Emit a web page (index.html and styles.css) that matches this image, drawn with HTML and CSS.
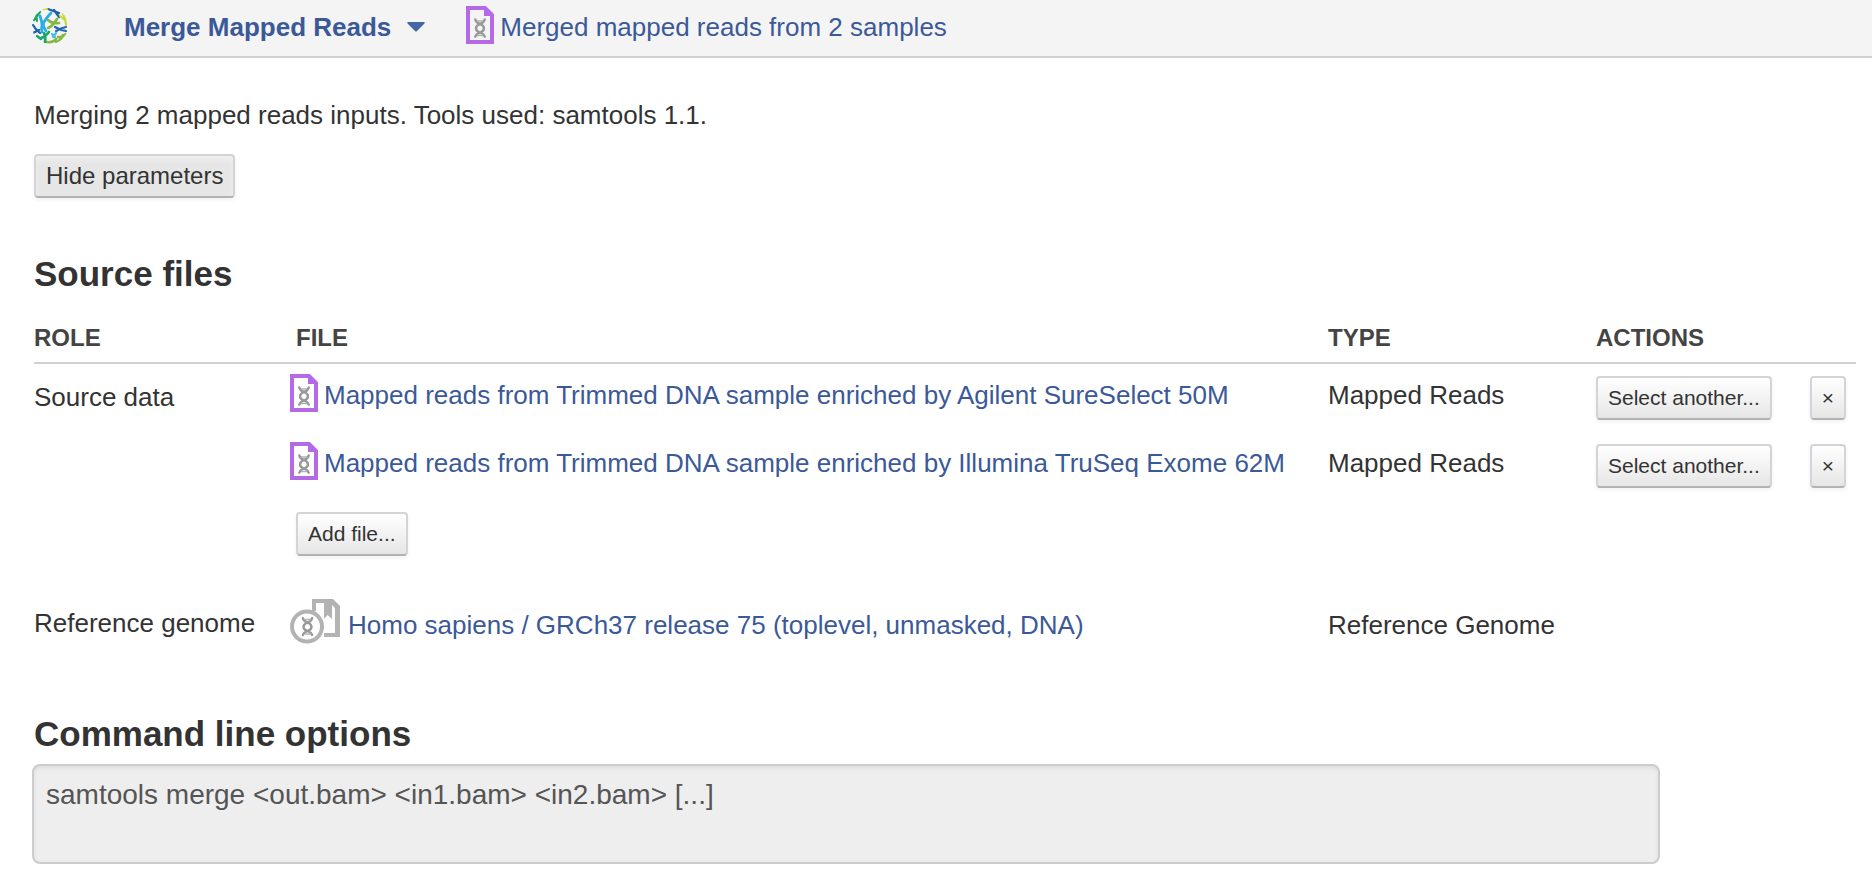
FILE: index.html
```html
<!DOCTYPE html>
<html lang="en">
<head>
<meta charset="utf-8">
<title>Merge Mapped Reads</title>
<meta name="viewport" content="width=device-width, initial-scale=1">
<link rel="stylesheet" href="styles.css">
</head>
<body>
<svg class="sprite" aria-hidden="true">
  <symbol id="helix" viewBox="0 0 12 20">
    <g fill="none" stroke="#999" stroke-width="2.4" stroke-linecap="round">
      <path d="M1.300 1.400Q2 4.500 6 6Q10 7.500 10 10.500Q10 13 6 14.500Q2 16 1.300 18.600"/>
      <path d="M10.700 1.400Q10 4.500 6 6Q2 7.500 2 10.500Q2 13 6 14.500Q10 16 10.700 18.600"/>
    </g>
    <path d="M3 3H9M3 17.500H9" stroke="#b4b4b4" stroke-width="1.4"/>
  </symbol>
  <symbol id="reads-file" viewBox="0 0 28 38">
    <path d="M2 2H19L26 9V36H2Z" fill="none" stroke="#b469e6" stroke-width="4"/>
    <path d="M18 1H20.500L27 7.500V10H18Z" fill="#b469e6"/>
    <use href="#helix" x="8" y="12" width="12" height="20"/>
  </symbol>
  <symbol id="genome" viewBox="0 0 50 46">
    <path d="M22 12V0H43L50 7V38H34V34H45V9L42 6V20L37.500 16L34 20V4H26V12Z" fill="#b3b3b3"/>
    <circle cx="17" cy="27.500" r="15" fill="#fff" stroke="#b3b3b3" stroke-width="4"/>
    <use href="#helix" x="11.500" y="17.500" width="12" height="20"/>
  </symbol>
</svg>

<header class="topbar">
  <svg class="logo" viewBox="0 0 36 36" role="img" aria-label="Home">
    <defs><clipPath id="disc"><circle cx="18" cy="18" r="18"/></clipPath></defs>
    <g clip-path="url(#disc)" fill="none" stroke-width="2.200" stroke-linecap="round" stroke-linejoin="round">
      <path stroke="#21a55a" d="M2 12L8 4M4 6L5 13"/>
      <path stroke="#27aee6" stroke-width="2.800" d="M8 8Q10 14 10 17Q9 21 10 24M19 5Q15 9 12 14Q10 17 14 23"/>
      <path stroke="#1f60ad" d="M16 1L27 5M22 2L27 9M1 17Q3 21 8 25M1 25L7 22"/>
      <path stroke="#c4dc38" d="M11 1L15 1M31 6Q34 11 34 17M28 8L33 12"/>
      <path stroke="#84b840" stroke-width="2.600" d="M16 12Q20 16 27 15M16 20Q21 18 25 11M26 29Q30 30 34 26M24 34Q29 33 31 27M15 34Q21 35 24 31"/>
      <path stroke="#2467b3" d="M23 19Q28 22 34 23M24 23Q29 20 34 19"/>
      <path stroke="#18a66a" stroke-width="2.600" d="M9 30Q13 29 17 24M12 25Q14 29 13 34M5 28L9 31"/>
      <path stroke="#49bbea" d="M20 26L23 29M24 25L21 29"/>
    </g>
  </svg>
  <button class="app-menu" type="button">Merge Mapped Reads
    <svg class="caret" viewBox="0 0 18 10" aria-hidden="true"><path d="M1 0H17Q18.500 .5 17 2L10 9Q9 10 8 9L1 2Q-.5 .5 1 0Z" fill="#4665a6"/></svg>
  </button>
  <a class="file-link" href="#"><svg class="file-icon" aria-hidden="true"><use href="#reads-file"/></svg>Merged mapped reads from 2 samples</a>
</header>

<main class="content">
  <p class="summary">Merging 2 mapped reads inputs. Tools used: samtools 1.1.</p>
  <button class="btn btn-pressed" type="button">Hide parameters</button>

  <h2 class="heading">Source files</h2>
  <table class="sources">
    <colgroup><col class="col-role"><col><col class="col-type"><col class="col-actions"></colgroup>
    <thead>
      <tr><th scope="col">ROLE</th><th scope="col">FILE</th><th scope="col">TYPE</th><th scope="col">ACTIONS</th></tr>
    </thead>
    <tbody>
      <tr>
        <td class="role" rowspan="3">Source data</td>
        <td class="file"><a class="file-link" href="#"><svg class="file-icon" aria-hidden="true"><use href="#reads-file"/></svg>Mapped reads from Trimmed DNA sample enriched by Agilent SureSelect 50M</a></td>
        <td>Mapped Reads</td>
        <td class="action-cell"><div class="actions"><button class="btn btn-small" type="button">Select another...</button><button class="btn btn-small" type="button" aria-label="Remove">×</button></div></td>
      </tr>
      <tr>
        <td class="file"><a class="file-link" href="#"><svg class="file-icon" aria-hidden="true"><use href="#reads-file"/></svg>Mapped reads from Trimmed DNA sample enriched by Illumina TruSeq Exome 62M</a></td>
        <td>Mapped Reads</td>
        <td class="action-cell"><div class="actions"><button class="btn btn-small" type="button">Select another...</button><button class="btn btn-small" type="button" aria-label="Remove">×</button></div></td>
      </tr>
      <tr class="add-row">
        <td class="action-cell"><button class="btn btn-small" type="button">Add file...</button></td>
        <td></td>
        <td></td>
      </tr>
      <tr class="genome-row">
        <td class="role">Reference genome</td>
        <td class="file"><a class="file-link" href="#"><svg class="genome-icon" aria-hidden="true"><use href="#genome"/></svg>Homo sapiens / GRCh37 release 75 (toplevel, unmasked, DNA)</a></td>
        <td>Reference Genome</td>
        <td></td>
      </tr>
    </tbody>
  </table>

  <h2 class="heading"><label for="command">Command line options</label></h2>
  <textarea class="command" id="command" readonly>samtools merge &lt;out.bam&gt; &lt;in1.bam&gt; &lt;in2.bam&gt; [...]</textarea>
</main>
</body>
</html>
```

FILE: styles.css
```css
* {
  box-sizing: border-box;
}

body {
  margin: 0;
  background: #fff;
  color: #333;
  font: 26px/32px "Liberation Sans", Arial, sans-serif;
}

button,
textarea {
  font-family: inherit;
}

.sprite {
  position: absolute;
  width: 0;
  height: 0;
}

.topbar {
  display: flex;
  align-items: flex-start;
  height: 58px;
  padding: 6px 32px;
  background: #f4f4f4;
  border-bottom: 2px solid #d0d0d0;
}

.logo {
  width: 36px;
  height: 36px;
  margin: 2px 56px 0 0;
}

.app-menu {
  display: flex;
  align-items: center;
  gap: 16px;
  margin-right: 41px;
  padding: 0;
  border: 0;
  background: none;
  color: #3b5998;
  font-size: 26px;
  font-weight: bold;
  line-height: 42px;
}

.caret {
  width: 18px;
  height: 10px;
}

.file-link {
  display: flex;
  align-items: flex-start;
  gap: 6px;
  color: #3b5998;
  line-height: 42px;
  text-decoration: none;
  white-space: nowrap;
}

.file-icon {
  flex: none;
  width: 28px;
  height: 38px;
}

.content {
  padding: 41px 16px 30px 34px;
}

.summary {
  margin: 0 0 23px;
}

.btn {
  height: 44px;
  padding: 0 10px;
  border: 2px solid #d4d4d4;
  border-bottom-color: #b3b3b3;
  border-radius: 4px;
  background: linear-gradient(#fff, #e6e6e6);
  box-shadow: 0 2px 4px rgba(0, 0, 0, 0.06);
  color: #333;
  font-size: 24px;
  line-height: 36px;
  white-space: nowrap;
}

.btn-small {
  font-size: 21px;
}

.btn-pressed {
  background: #e6e6e6;
  box-shadow: inset 0 4px 6px rgba(255, 255, 255, 0.4), 0 2px 4px rgba(0, 0, 0, 0.06);
}

.heading {
  margin: 56px 0 0;
  font-size: 35px;
  line-height: 40px;
}

.sources {
  width: 100%;
  margin-top: 28px;
  border-collapse: separate;
  border-spacing: 0;
  table-layout: fixed;
}

.col-role {
  width: 262px;
}

.col-type {
  width: 268px;
}

.col-actions {
  width: 260px;
}

.sources th {
  padding: 0 0 8px;
  border-bottom: 2px solid #d0d0d0;
  color: #444;
  font-size: 24px;
  line-height: 32px;
  text-align: left;
}

.sources td {
  height: 68px;
  padding: 10px 0 0;
  line-height: 42px;
  vertical-align: top;
}

.sources .role,
.sources .action-cell {
  padding-top: 12px;
}

.action-cell .btn {
  display: block;
}

.file .file-link {
  margin-left: -6px;
}

.actions {
  display: flex;
  justify-content: space-between;
  padding-right: 10px;
}

.sources .add-row td {
  height: 90px;
}

.genome-row td:not(.role) {
  padding-top: 9px;
  line-height: 52px;
}

.genome-row .file-link {
  gap: 8px;
  line-height: 52px;
}

.genome-icon {
  flex: none;
  width: 50px;
  height: 46px;
}

.command {
  display: block;
  width: calc(100% - 194px);
  height: 100px;
  margin: 10px 0 0 -2px;
  padding: 10px 12px;
  border: 2px solid #ccc;
  border-radius: 8px;
  background: #eee;
  box-shadow: inset 0 2px 4px rgba(0, 0, 0, 0.08);
  color: #555;
  font-size: 28px;
  line-height: 38px;
  resize: none;
}
```
